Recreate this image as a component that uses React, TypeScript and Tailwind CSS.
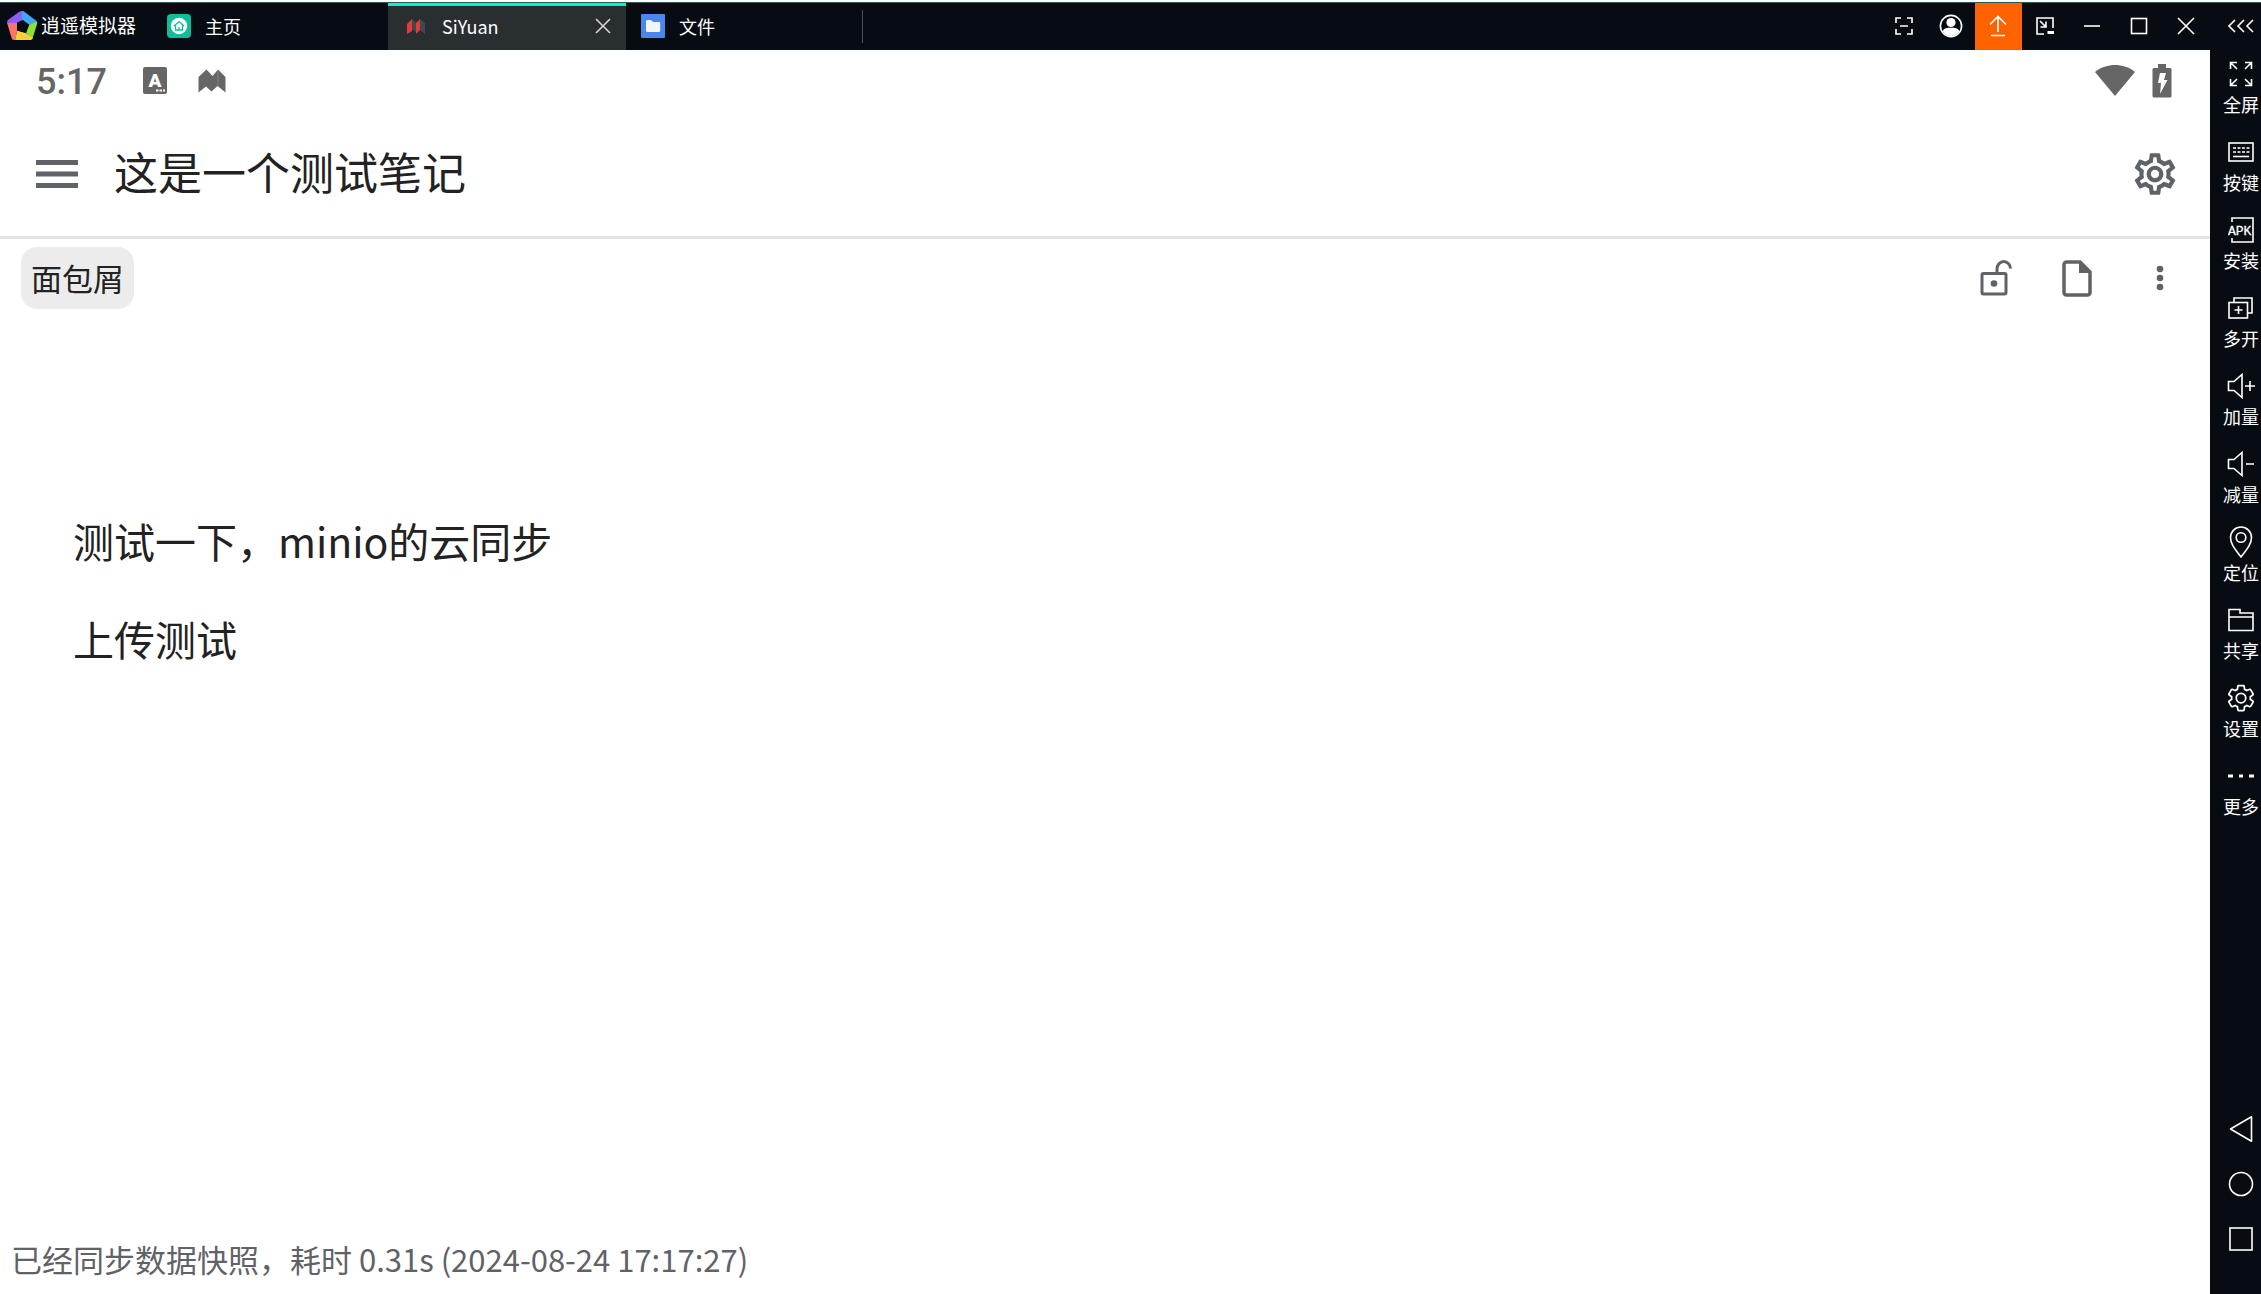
import type { ReactNode } from "react";

const FONT =
  "font-['Noto_Sans_CJK_SC',sans-serif]";

function Icon({ w, h, children }: { w: number; h: number; children: ReactNode }) {
  return (
    <svg
      width={w}
      height={h}
      viewBox={`0 0 ${w} ${h}`}
      fill="none"
      stroke="currentColor"
      strokeWidth="1.6"
      className="shrink-0"
      aria-hidden="true"
    >
      {children}
    </svg>
  );
}

const GEAR =
  "M19.43 12.98c.04-.32.07-.64.07-.98 0-.34-.03-.66-.07-.98l2.11-1.65c.19-.15.24-.42.12-.64l-2-3.46c-.09-.16-.26-.25-.44-.25-.06 0-.12.01-.17.03l-2.49 1c-.52-.4-1.08-.73-1.69-.98l-.38-2.65C14.46 2.18 14.25 2 14 2h-4c-.25 0-.46.18-.49.42l-.38 2.65c-.61.25-1.17.59-1.69.98l-2.49-1c-.06-.02-.12-.03-.18-.03-.17 0-.34.09-.43.25l-2 3.46c-.13.22-.07.49.12.64l2.11 1.65c-.04.32-.07.65-.07.98 0 .33.03.66.07.98l-2.11 1.65c-.19.15-.24.42-.12.64l2 3.46c.09.16.26.25.44.25.06 0 .12-.01.17-.03l2.49-1c.52.4 1.08.73 1.69.98l.38 2.65c.03.24.24.42.49.42h4c.25 0 .46-.18.49-.42l.38-2.65c.61-.25 1.17-.59 1.69-.98l2.49 1c.06.02.12.03.18.03.17 0 .34-.09.43-.25l2-3.46c.12-.22.07-.49-.12-.64l-2.11-1.65z";

const GEAR_INNER =
  "M17.45 11.27c.04.31.05.52.05.73 0 .21-.02.43-.05.73l-.14 1.13.89.7 1.08.84-.7 1.21-1.27-.51-1.04-.42-.9.68c-.43.32-.84.56-1.25.73l-1.06.43-.16 1.13-.2 1.35h-1.4l-.19-1.35-.16-1.13-1.06-.43c-.43-.18-.83-.41-1.23-.71l-.91-.7-1.06.43-1.27.51-.7-1.21 1.08-.84.89-.7-.14-1.13c-.03-.31-.05-.54-.05-.74s.02-.43.05-.73l.14-1.13-.89-.7-1.08-.84.7-1.21 1.27.51 1.04.42.9-.68c.43-.32.84-.56 1.25-.73l1.06-.43.16-1.13.2-1.35h1.39l.19 1.35.16 1.13 1.06.43c.43.18.83.41 1.23.71l.91.7 1.06-.43 1.27-.51.7 1.21-1.07.85-.89.7.14 1.13zM12 8c-2.21 0-4 1.79-4 4s1.79 4 4 4 4-1.79 4-4-1.79-4-4-4zm0 6c-1.1 0-2-.9-2-2s.9-2 2-2 2 .9 2 2-.9 2-2 2z";

const windowButtons = [
  {
    label: "截图",
    icon: (
      <Icon w={18} h={18}>
        <path d="M1 6V1h5M12 1h5v5M17 12v5h-5M6 17H1v-5M5 9h8" />
      </Icon>
    ),
  },
  {
    label: "账号",
    icon: (
      <Icon w={24} h={24}>
        <circle cx="12" cy="12" r="10.6" />
        <circle cx="12" cy="8.500" r="4.600" fill="currentColor" stroke="none" />
        <path d="M3.600 17C5 14.300 8 13.800 12 13.800s7 .5 8.400 3.200A9.800 9.800 0 0 1 12 22a9.800 9.800 0 0 1-8.400-5z" fill="currentColor" stroke="none" />
      </Icon>
    ),
  },
  {
    label: "更新",
    highlight: true,
    icon: (
      <Icon w={18} h={22}>
        <path d="M9 17V2M1 9.500 9 1.500l8 8M2 20.500h14" />
      </Icon>
    ),
  },
  {
    label: "小窗",
    icon: (
      <Icon w={20} h={18}>
        <path d="M9 17H2V1h16v10M5 4l6 6M11 4.500V10H5.500" />
        <path d="M12.500 15.500h6.500" strokeWidth="3" />
      </Icon>
    ),
  },
  {
    label: "最小化",
    icon: (
      <Icon w={18} h={18}>
        <path d="M1 9h16" />
      </Icon>
    ),
  },
  {
    label: "最大化",
    icon: (
      <Icon w={18} h={18}>
        <rect x="1.500" y="1.500" width="15" height="15" />
      </Icon>
    ),
  },
  {
    label: "关闭",
    icon: (
      <Icon w={18} h={18}>
        <path d="m1 1 16 16M17 1 1 17" />
      </Icon>
    ),
  },
];

const tools = [
  {
    label: "全屏",
    icon: (
      <Icon w={24} h={26}>
        <path d="M1.500 8V1.500H8M2 2l6 6M16 1.500h6.500V8M22 2l-6 6M1.500 18v6.500H8M2 24l6-6M22.500 18v6.500H16M22 24l-6-6" />
      </Icon>
    ),
  },
  {
    label: "按键",
    icon: (
      <Icon w={26} h={20}>
        <rect x="1" y="1" width="24" height="18" />
        <path d="M5 6h17M5 10h17" strokeDasharray="3 1.500" />
        <path d="M5 14.500h16" />
      </Icon>
    ),
  },
  {
    label: "安装",
    icon: (
      <Icon w={26} h={26}>
        <path d="M4 5V1h21v24H4v-4" />
        <text
          x="0"
          y="18"
          fontSize="13"
          fill="currentColor"
          stroke="currentColor"
          strokeWidth="0.300"
          fontFamily="Liberation Mono, monospace"
        >
          APK
        </text>
      </Icon>
    ),
  },
  {
    label: "多开",
    icon: (
      <Icon w={26} h={22}>
        <path d="M6 5V1h18v15h-4" />
        <rect x="1" y="5.500" width="18.500" height="15.500" />
        <path d="M6.500 13h8M10.500 9v8" />
      </Icon>
    ),
  },
  {
    label: "加量",
    icon: (
      <Icon w={28} h={26}>
        <path d="M1.500 8.500H7L15 1.500v23L7 17.500H1.500zM18 13h10M23 8v10" />
      </Icon>
    ),
  },
  {
    label: "减量",
    icon: (
      <Icon w={28} h={26}>
        <path d="M1.500 8.500H7L15 1.500v23L7 17.500H1.500zM19 13h8" />
      </Icon>
    ),
  },
  {
    label: "定位",
    icon: (
      <Icon w={24} h={32}>
        <path d="M12 31C6 23 1.500 18 1.500 11.500a10.500 10.500 0 0 1 21 0C22.500 18 18 23 12 31z" />
        <circle cx="12" cy="11.500" r="4.800" />
      </Icon>
    ),
  },
  {
    label: "共享",
    icon: (
      <Icon w={26} h={24}>
        <path d="M1 22.500V1.500h11V5h13v17.500zM1 9h24" />
      </Icon>
    ),
  },
  {
    label: "设置",
    icon: (
      <svg width="30" height="30" viewBox="0 0 24 24" fill="none" stroke="currentColor" strokeWidth="1.400" className="shrink-0" aria-hidden="true">
        <path d={GEAR} />
        <circle cx="12" cy="12" r="3.800" />
      </svg>
    ),
  },
  {
    label: "更多",
    icon: (
      <Icon w={26} h={4}>
        <path d="M0 2h5M11 2h4M21 2h5" strokeWidth="3" />
      </Icon>
    ),
  },
];

const navKeys = [
  { label: "返回", icon: <path d="M2.500 14 23.500 1.800v24.400z" strokeLinejoin="round" /> },
  { label: "主屏幕", icon: <circle cx="13" cy="14" r="11.500" /> },
  { label: "最近任务", icon: <rect x="2" y="3" width="22" height="22" /> },
];

const paragraphs = ["测试一下，minio的云同步", "上传测试"];

function TitleBar() {
  return (
    <header className="flex h-[47px] shrink-0 items-stretch text-white">
      <div className="flex w-[151px] items-center gap-[3px] pb-0.5 pl-1.5">
        <svg width="32" height="32" viewBox="0 0 32 32" aria-hidden="true" className="shrink-0">
          <path d="M16 1C15 1 14 1.400 13 2L2.500 9.500C1.300 10.400.8 12 1.200 13.500L11 13l6.500-3z" fill="#8b5cf6" />
          <path d="M16 1c1 0 2 .4 3 1.200L30 10.500c.6.500.9 1.200 1 2L24 15l-8.500-5z" fill="#42a5f5" />
          <path d="M31 11.500c.3 1 .2 2-.1 3l-4.400 14-6.500-6 3-7.500z" fill="#8ae234" />
          <path d="M27 28c-.6 1.200-1.400 2-2.500 2H9l2-9.500 9 2.500z" fill="#f5d03b" />
          <path d="M1.100 13 11 13v7.500L9.500 30H8c-1 0-2-.7-2.300-1.700z" fill="#f87666" />
          <path d="m11.500 12.500 5.500-2.500 6 5-3 8-9-2.500z" fill="#070c13" />
        </svg>
        <span className="text-[19px] whitespace-nowrap">逍遥模拟器</span>
      </div>
      <nav className="flex text-lg">
        <button type="button" className="flex w-[237px] items-center gap-3.5 px-4 pb-0.5">
          <svg width="24" height="24" viewBox="0 0 24 24" aria-hidden="true">
            <rect width="24" height="24" rx="4" fill="#10bd9b" />
            <circle cx="12" cy="12" r="8.200" fill="#fff" />
            <path d="M8.500 11.500V16h7v-4.500M7 12l5-4.500 5 4.500M12 16v-3" fill="none" stroke="#10bd9b" strokeWidth="1.300" />
          </svg>
          主页
        </button>
        <div className="flex w-[238px] items-center gap-3.5 border-t-3 border-[#00f5c8] bg-[#292e30] pr-[15px] pb-[5px] pl-4">
          <svg width="24" height="24" viewBox="0 0 24 24" aria-hidden="true">
            <path d="m3 10 5-5v12l-5 3zM12 9l4-4v11l-4 4z" fill="#e03c3c" />
            <path d="m8 5 4 4v9l-4-3zM16 5l5 4v11l-5-4z" fill="#43484c" />
          </svg>
          <button type="button" className="flex-1 text-left">
            SiYuan
          </button>
          <button type="button" aria-label="关闭标签" className="text-[#d4d5d6]">
            <Icon w={16} h={16}>
              <path d="m1 1 14 14M15 1 1 15" />
            </Icon>
          </button>
        </div>
        <button type="button" className="flex w-[236px] items-center gap-3.5 px-[15px] pb-0.5">
          <svg width="24" height="24" viewBox="0 0 24 24" aria-hidden="true">
            <rect width="24" height="24" rx="1" fill="#4a86ee" />
            <path d="M5 7.500c0-.8.5-1.500 1.300-1.500H10l2 2h6c.7 0 1.200.5 1.200 1.200v7.600c0 .7-.5 1.200-1.200 1.200H6.200c-.7 0-1.200-.5-1.200-1.200z" fill="#f4f5f7" />
          </svg>
          文件
        </button>
        <span className="my-[7px] w-px bg-[#4b4f55]" />
      </nav>
      <div className="ml-auto flex">
        {windowButtons.map((b) => (
          <button
            key={b.label}
            type="button"
            aria-label={b.label}
            className={`flex w-[47px] items-center justify-center pr-px pb-px ${b.highlight ? "bg-[#ff6200]" : ""}`}
          >
            {b.icon}
          </button>
        ))}
      </div>
      <button type="button" aria-label="收起侧栏" className="flex w-[51px] items-center justify-center pb-px pl-[11px]">
        <Icon w={26} h={14}>
          <path d="M7 1 1 7l6 6M16 1l-6 6 6 6M25 1l-6 6 6 6" />
        </Icon>
      </button>
    </header>
  );
}

function StatusBar() {
  return (
    <div className="flex h-16 items-center pr-[38px] pb-[3px] pl-9 text-[#666]">
      <span className="pt-0.5 font-[Roboto,sans-serif] text-4xl font-medium">5:17</span>
      <svg width="24" height="27" viewBox="0 0 24 27" className="ml-9" aria-hidden="true">
        <rect width="24" height="27" rx="2" fill="currentColor" />
        <text x="12" y="20" textAnchor="middle" fontSize="19" fontWeight="900" fontFamily="Roboto, sans-serif" fill="#fff">
          A
        </text>
        <path d="M13 23.500h9" stroke="#fff" strokeWidth="2" strokeDasharray="2.500 1" />
      </svg>
      <svg width="28" height="24" viewBox="0 0 28 24" className="ml-[31px]" aria-hidden="true">
        <path d="m.5 8 8-7.500 6 6.500 5.500-6.500 7.500 7.500v15.500l-8-6.500-6 5.500-5.500-5-7.500 6z" fill="currentColor" />
        <path d="M20 1v15.500" stroke="#8a8a8a" strokeWidth="0.800" />
      </svg>
      <svg width="42" height="33" viewBox="0 0 42 33" className="ml-auto" aria-hidden="true">
        <path d="M1 8C7 3 14 1 21 1s14 2 20 7L21 32z" fill="currentColor" />
      </svg>
      <svg width="20" height="34" viewBox="0 0 20 34" className="ml-4" aria-hidden="true">
        <path d="M6 0h8v4h4c.8 0 1.500.7 1.500 1.500V32c0 .8-.7 1.500-1.500 1.500H2C1.200 33.500.5 32.800.5 32V5.500C.5 4.700 1.200 4 2 4h4z" fill="currentColor" />
        <path d="M8 9h6l-2 7h3.500L8 30l1-11H6z" fill="#fff" />
      </svg>
    </div>
  );
}

function Toolbar() {
  return (
    <div className="flex h-[125px] items-center border-b-3 border-[#e3e3e3] pr-[30px] pb-0.5 pl-9">
      <button type="button" aria-label="菜单" className="text-[#5f6368]">
        <svg width="42" height="28" viewBox="0 0 42 28" aria-hidden="true">
          <path d="M0 2.500h42M0 14h42M0 25.500h42" stroke="currentColor" strokeWidth="5" />
        </svg>
      </button>
      <h1 className="ml-9 pb-1.5 text-[44px] leading-none text-[#222]">这是一个测试笔记</h1>
      <button type="button" aria-label="设置" className="ml-auto text-[#5f6368]">
        <svg width="50" height="50" viewBox="0 0 24 24" fill="currentColor" fillRule="evenodd" aria-hidden="true">
          <path d={GEAR + GEAR_INNER} />
        </svg>
      </button>
    </div>
  );
}

function Breadcrumb() {
  return (
    <div className="flex items-center pt-2 pr-[42px] pl-[21px]">
      <button type="button" className="h-[62px] rounded-2xl bg-[#ececec] px-[10px] text-[31px] text-[#222]">
        面包屑
      </button>
      <div className="ml-auto flex items-center text-[#5f6368]">
        <button type="button" aria-label="锁定编辑">
          <svg width="32" height="36" viewBox="0 0 32 36" fill="none" stroke="currentColor" strokeWidth="3" aria-hidden="true">
            <rect x="2" y="13.500" width="24" height="20.500" rx="1.500" />
            <path d="M17 13V9c0-4 3-7.500 6.800-7.500S30.500 5 30.500 8.500" />
            <circle cx="14" cy="23.500" r="3.300" fill="currentColor" stroke="none" />
          </svg>
        </button>
        <button type="button" aria-label="文档" className="ml-[50px]">
          <svg width="30" height="37" viewBox="0 0 30 37" aria-hidden="true">
            <path d="M4.500 2H18l10 10v20.500a2.500 2.500 0 0 1-2.500 2.500h-21A2.500 2.500 0 0 1 2 32.500v-28A2.500 2.500 0 0 1 4.500 2z" fill="none" stroke="currentColor" strokeWidth="3.500" />
            <path d="M17 1v12h12z" fill="currentColor" />
          </svg>
        </button>
        <button type="button" aria-label="更多" className="ml-[60px]">
          <svg width="16" height="26" viewBox="0 0 16 26" fill="currentColor" aria-hidden="true">
            <circle cx="8" cy="4" r="3.300" />
            <circle cx="8" cy="13" r="3.300" />
            <circle cx="8" cy="22" r="3.300" />
          </svg>
        </button>
      </div>
    </div>
  );
}

function SideBar() {
  return (
    <aside className="flex w-[51px] shrink-0 flex-col pl-[11px] text-white">
      <div className="flex flex-col pt-1.5">
        {tools.map((t) => (
          <button key={t.label} type="button" className="flex h-[78px] flex-col items-center text-lg leading-6">
            <span className="flex h-9 items-center">{t.icon}</span>
            <span className="whitespace-nowrap">{t.label}</span>
          </button>
        ))}
      </div>
      <div className="mt-auto flex flex-col items-center gap-[27px] pb-[41px]">
        {navKeys.map((k) => (
          <button key={k.label} type="button" aria-label={k.label} className="flex">
            <Icon w={26} h={28}>{k.icon}</Icon>
          </button>
        ))}
      </div>
    </aside>
  );
}

export default function App() {
  return (
    <div className={`flex min-h-screen flex-col border-t-2 border-white bg-[#070c13] ${FONT}`}>
      <div className="h-px shrink-0 bg-[#2c5a52]" />
      <TitleBar />
      <div className="flex flex-1">
        <main className="flex flex-1 flex-col bg-white">
          <StatusBar />
          <Toolbar />
          <Breadcrumb />
          <article className="flex flex-col gap-9 px-[73px] pt-[200px] text-[41px] leading-[62px] text-[#222]">
            {paragraphs.map((p) => (
              <p key={p}>{p}</p>
            ))}
          </article>
          <footer className="mt-auto px-[11px] pb-3 text-[31px] text-[#5f6368]">
            已经同步数据快照，耗时 0.31s (2024-08-24 17:17:27)
          </footer>
        </main>
        <SideBar />
      </div>
    </div>
  );
}
